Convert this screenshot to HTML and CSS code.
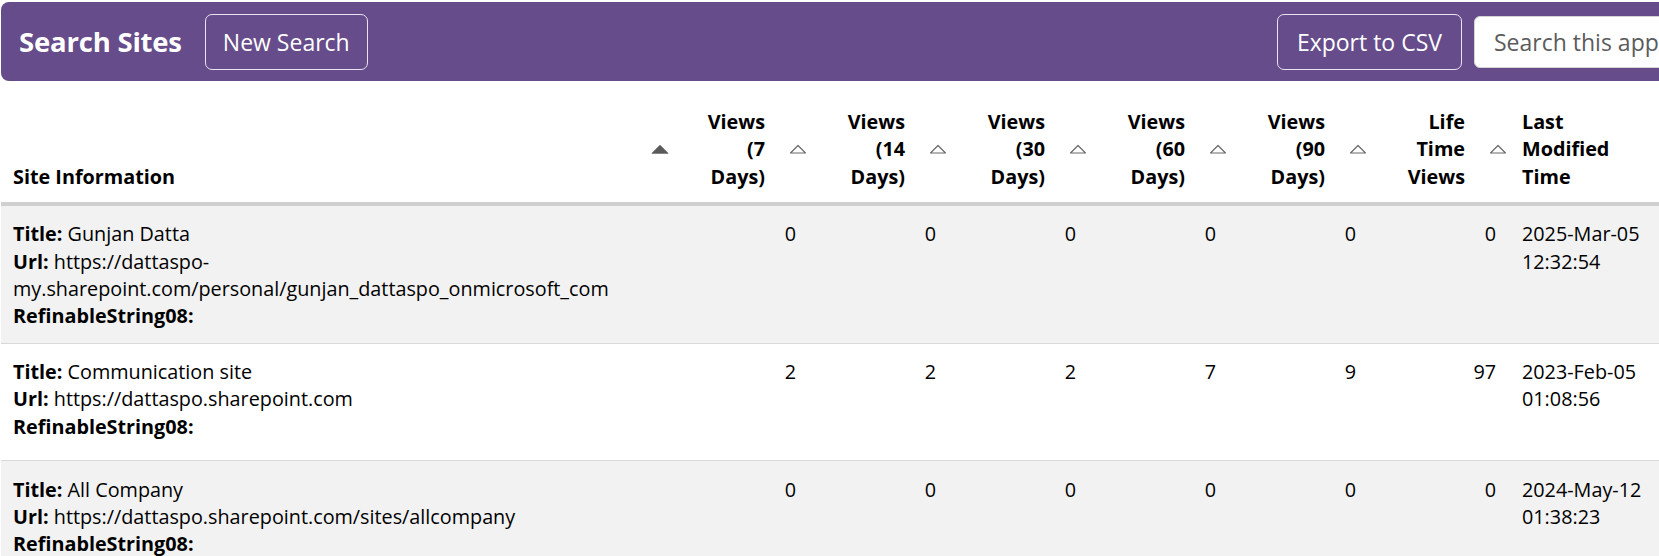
FILE: index.html
```html
<!DOCTYPE html>
<html lang="en">
<head>
<meta charset="utf-8">
<title>Search Sites</title>
<link rel="stylesheet" href="styles.css">
</head>
<body>
<div class="app">
  <header class="topbar">
    <h1 class="title">Search Sites</h1>
    <button class="btn" type="button">New Search</button>
    <div class="topbar-right">
      <button class="btn" type="button">Export to CSV</button>
      <input class="search" type="text" placeholder="Search this app">
    </div>
  </header>

  <div class="table" role="table">
    <div class="row head" role="row">
      <div class="th th-site" role="columnheader">
        <span class="label">Site Information</span>
        <svg class="sort sorted" viewBox="0 0 18 10" aria-hidden="true"><path d="M1 9.3 L9 1.2 L17 9.3 Z" fill="#5a5a5a" stroke="#5a5a5a" stroke-width="0.8" stroke-linejoin="round"/></svg>
      </div>
      <div class="th th-num" role="columnheader">
        <span class="label">Views (7 Days)</span>
        <svg class="sort" viewBox="0 0 18 10" aria-hidden="true"><path d="M1.5 9 L9 1.5 L16.5 9 Z" fill="none" stroke="#6a6a6a" stroke-width="1.2" stroke-linejoin="round"/></svg>
      </div>
      <div class="th th-num" role="columnheader">
        <span class="label">Views (14 Days)</span>
        <svg class="sort" viewBox="0 0 18 10" aria-hidden="true"><path d="M1.5 9 L9 1.5 L16.5 9 Z" fill="none" stroke="#6a6a6a" stroke-width="1.2" stroke-linejoin="round"/></svg>
      </div>
      <div class="th th-num" role="columnheader">
        <span class="label">Views (30 Days)</span>
        <svg class="sort" viewBox="0 0 18 10" aria-hidden="true"><path d="M1.5 9 L9 1.5 L16.5 9 Z" fill="none" stroke="#6a6a6a" stroke-width="1.2" stroke-linejoin="round"/></svg>
      </div>
      <div class="th th-num" role="columnheader">
        <span class="label">Views (60 Days)</span>
        <svg class="sort" viewBox="0 0 18 10" aria-hidden="true"><path d="M1.5 9 L9 1.5 L16.5 9 Z" fill="none" stroke="#6a6a6a" stroke-width="1.2" stroke-linejoin="round"/></svg>
      </div>
      <div class="th th-num" role="columnheader">
        <span class="label">Views (90 Days)</span>
        <svg class="sort" viewBox="0 0 18 10" aria-hidden="true"><path d="M1.5 9 L9 1.5 L16.5 9 Z" fill="none" stroke="#6a6a6a" stroke-width="1.2" stroke-linejoin="round"/></svg>
      </div>
      <div class="th th-num" role="columnheader">
        <span class="label">Life Time Views</span>
        <svg class="sort" viewBox="0 0 18 10" aria-hidden="true"><path d="M1.5 9 L9 1.5 L16.5 9 Z" fill="none" stroke="#6a6a6a" stroke-width="1.2" stroke-linejoin="round"/></svg>
      </div>
      <div class="th th-date" role="columnheader">
        <span class="label">Last Modified Time</span>
      </div>
    </div>

    <div class="row item alt" role="row">
      <div class="td td-site" role="cell">
        <div><b>Title:</b> Gunjan Datta</div>
        <div><b>Url:</b> https://dattaspo-my.sharepoint.com/personal/gunjan_dattaspo_onmicrosoft_com</div>
        <div><b>RefinableString08:</b></div>
      </div>
      <div class="td td-num" role="cell">0</div>
      <div class="td td-num" role="cell">0</div>
      <div class="td td-num" role="cell">0</div>
      <div class="td td-num" role="cell">0</div>
      <div class="td td-num" role="cell">0</div>
      <div class="td td-num" role="cell">0</div>
      <div class="td td-date" role="cell">2025-Mar-05 12:32:54</div>
    </div>

    <div class="row item" role="row">
      <div class="td td-site" role="cell">
        <div><b>Title:</b> Communication site</div>
        <div><b>Url:</b> https://dattaspo.sharepoint.com</div>
        <div><b>RefinableString08:</b></div>
      </div>
      <div class="td td-num" role="cell">2</div>
      <div class="td td-num" role="cell">2</div>
      <div class="td td-num" role="cell">2</div>
      <div class="td td-num" role="cell">7</div>
      <div class="td td-num" role="cell">9</div>
      <div class="td td-num" role="cell">97</div>
      <div class="td td-date" role="cell">2023-Feb-05 01:08:56</div>
    </div>

    <div class="row item alt" role="row">
      <div class="td td-site" role="cell">
        <div><b>Title:</b> All Company</div>
        <div><b>Url:</b> https://dattaspo.sharepoint.com/sites/allcompany</div>
        <div><b>RefinableString08:</b></div>
      </div>
      <div class="td td-num" role="cell">0</div>
      <div class="td td-num" role="cell">0</div>
      <div class="td td-num" role="cell">0</div>
      <div class="td td-num" role="cell">0</div>
      <div class="td td-num" role="cell">0</div>
      <div class="td td-num" role="cell">0</div>
      <div class="td td-date" role="cell">2024-May-12 01:38:23</div>
    </div>
  </div>
</div>
</body>
</html>
```

FILE: styles.css
```css
html, body {
  margin: 0;
  overflow: hidden;
  background: #ffffff;
}

body {
  font-family: "Open Sans", "Noto Sans", sans-serif;
  color: #000000;
}

.app {
  width: 1753px;
  padding: 2px 0 0 1px;
}

/* ---------- top bar ---------- */
.topbar {
  display: flex;
  align-items: center;
  box-sizing: border-box;
  height: 79px;
  padding: 0 20px 0 18px;
  background: #664c8a;
  border-radius: 8px;
}

.title {
  margin: 0 23px 0 0;
  font-size: 27.5px;
  font-weight: 700;
  color: #ffffff;
  letter-spacing: -0.2px;
}

.btn {
  height: 56px;
  padding: 0 17px;
  border: 1px solid #e9e3f0;
  border-radius: 7px;
  background: transparent;
  color: #ffffff;
  font-family: inherit;
  font-size: 23px;
}

.topbar-right {
  margin-left: auto;
  display: flex;
  align-items: center;
  gap: 12px;
}

.topbar-right .btn {
  padding: 0 19px;
}

.search {
  box-sizing: border-box;
  width: 260px;
  height: 52px;
  padding: 0 19px;
  border: 1px solid #d4d4d4;
  border-radius: 6px;
  background: #ffffff;
  font-family: inherit;
  font-size: 23px;
  color: #333333;
}

.search::placeholder {
  color: #5b5b5b;
}

/* ---------- grid table ---------- */
.row {
  display: grid;
  grid-template-columns: 671px repeat(6, 140px) 150px;
}

.head {
  margin-top: 19px;
  border-bottom: 4px solid #d0d0d0;
}

.th {
  display: flex;
  align-items: center;
  justify-content: flex-end;
  gap: 24px;
  padding: 8px 5px 12px 12px;
  font-size: 19.8px;
  font-weight: 700;
  line-height: 27.3px;
}

.th-site {
  justify-content: space-between;
  padding-right: 3px;
}

.th-site .label {
  align-self: flex-end;
}

.th-num .label {
  width: 64px;
  text-align: right;
}

.th-date {
  justify-content: flex-start;
  padding-left: 10px;
}

.th-date .label {
  width: 96px;
}

.sort {
  flex: none;
  width: 18px;
  height: 10px;
}

.item {
  box-sizing: border-box;
  min-height: 117.5px;
  border-bottom: 1px solid #d9d9d9;
  background: #ffffff;
}

.item.alt {
  background: #f2f2f2;
}

.td {
  padding: 14.5px 16px 13px 12px;
  font-size: 19.8px;
  line-height: 27.3px;
}

.td b {
  font-weight: 700;
}

.td-num {
  text-align: right;
}

.td-date {
  padding-left: 10px;
  padding-right: 8px;
}
```
